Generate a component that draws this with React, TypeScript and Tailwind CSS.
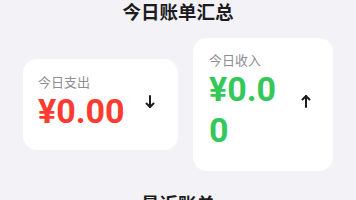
import React from 'react';

const ArrowIcon: React.FC<{ dir: 'up' | 'down' }> = ({ dir }) => (
  <svg width="10" height="14" viewBox="0 0 10 14" fill="none" stroke="#1c1c1e" strokeWidth="2" strokeLinecap="round" strokeLinejoin="round">
    {dir === 'down' ? (
      <>
        <path d="M5 1v11" />
        <path d="M1.5 8.5 5 12l3.5-3.5" />
      </>
    ) : (
      <>
        <path d="M5 13V2" />
        <path d="M1.5 5.5 5 2l3.5 3.5" />
      </>
    )}
  </svg>
);

interface SummaryCardProps {
  label: string;
  amount: string;
  color: string;
  dir: 'up' | 'down';
  box: string;
  textWidth: string;
}

const SummaryCard: React.FC<SummaryCardProps> = ({ label, amount, color, dir, box, textWidth }) => (
  <div className={`flex items-center bg-white rounded-[14px] ${box}`}>
    <div className={`flex flex-col ${textWidth}`}>
      <span className="text-[13px] leading-[18px] text-[#8e8e93]">{label}</span>
      <span
        className={`text-[34px] leading-[1.2] font-bold break-all ${color}`}
        style={{ fontFamily: 'Roboto, "Noto Sans CJK SC", sans-serif' }}
      >
        {amount}
      </span>
    </div>
    <div className="ml-auto">
      <ArrowIcon dir={dir} />
    </div>
  </div>
);

export default function App() {
  return (
    <div
      className="min-h-screen bg-[#f2f2f7] text-[#1c1c1e]"
      style={{ fontFamily: '"Inter", "Noto Sans CJK SC", sans-serif' }}
    >
      <h1 className="text-center text-[18.5px] leading-6 font-bold">今日账单汇总</h1>
      <div className="flex items-center justify-center gap-[15px] mt-[14px]">
        <SummaryCard
          label="今日支出"
          amount="¥0.00"
          color="text-[#ff3b30]"
          dir="down"
          box="w-[155px] pl-[15px] pr-[23px] pt-[14px] pb-[18px]"
          textWidth="w-[100px]"
        />
        <SummaryCard
          label="今日收入"
          amount="¥0.00"
          color="text-[#34c759]"
          dir="up"
          box="w-[140px] pl-[16px] pr-[22px] pt-[13px] pb-[20px]"
          textWidth="w-[76px]"
        />
      </div>
      <h2 className="text-center text-[18.5px] leading-6 font-bold mt-[21px]">最近账单</h2>
    </div>
  );
}
